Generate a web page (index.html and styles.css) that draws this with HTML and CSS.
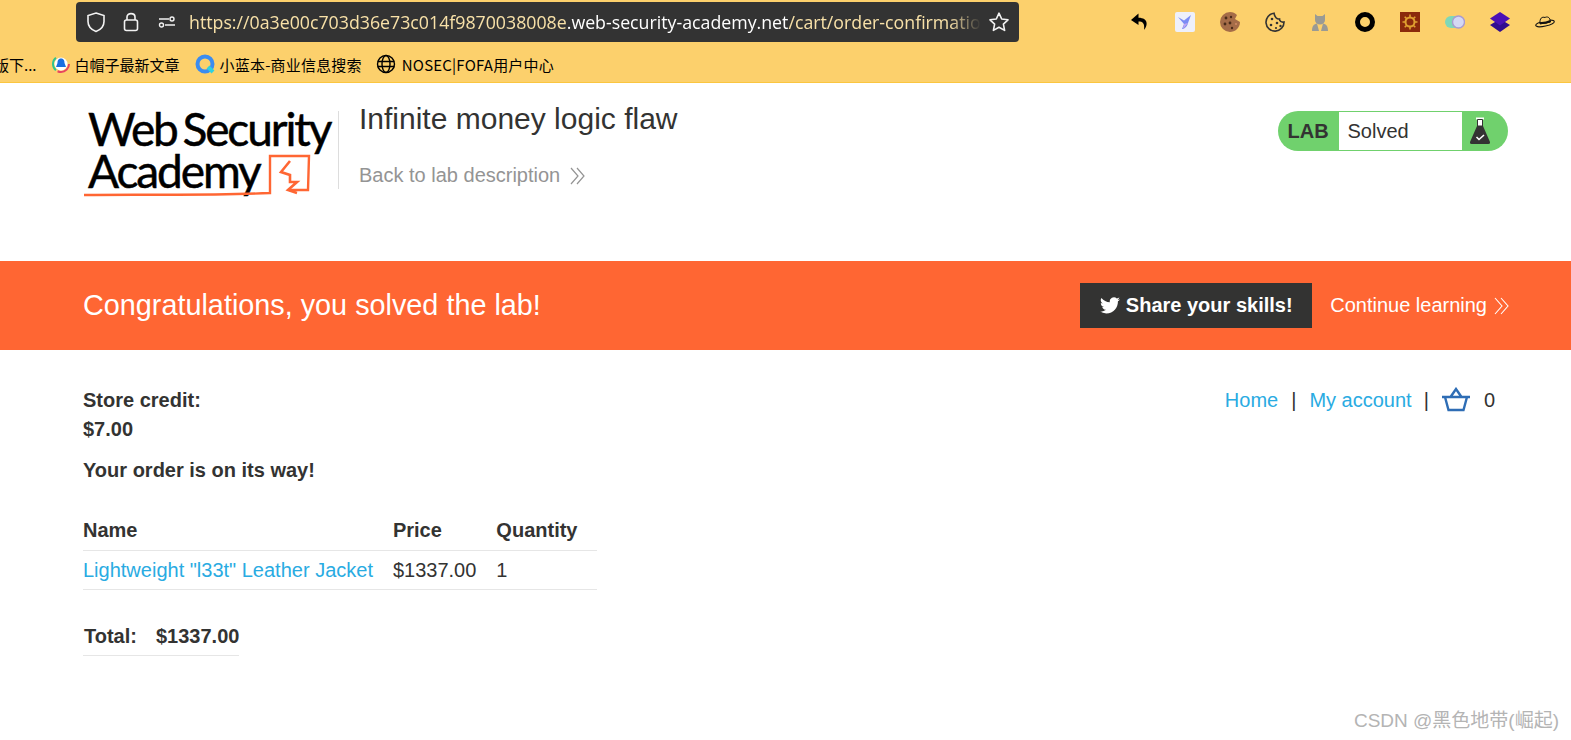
FILE: index.html
```html
<!DOCTYPE html>
<html lang="en">
<head>
    <meta charset="UTF-8">
    <meta name="viewport" content="width=device-width, initial-scale=1.0">
    <title>Infinite money logic flaw</title>
    <link rel="stylesheet" href="styles.css">
</head>
<body>
    <div class="browser-bar">
        <div class="toolbar">
            <div class="address-bar">
                <svg class="chrome-icon shield" width="20" height="22" viewBox="0 0 20 22" fill="none" stroke="#f2f2f2" stroke-width="1.6"><path d="M10 2 L18 4.5 V10.5 C18 15.5 14.5 18.8 10 20.5 C5.5 18.8 2 15.5 2 10.5 V4.5 Z"/></svg>
                <svg class="chrome-icon lock" width="16" height="22" viewBox="0 0 16 22" fill="none" stroke="#f2f2f2" stroke-width="1.6"><rect x="1.5" y="9" width="13" height="10.5" rx="2"/><path d="M4 9 V6 C4 1.500 12 1.500 12 6 V9"/></svg>
                <svg class="chrome-icon" width="18" height="14" viewBox="0 0 18 14" fill="none" stroke="#f2f2f2" stroke-width="1.4"><circle cx="3.500" cy="10" r="2"/><path d="M7 10 H17 M1 4 H11"/><circle cx="14" cy="4" r="2"/></svg>
                <div class="url"><span class="url-dim">https://0a3e00c703d36e73c014f9870038008e</span>.web-security-academy.net<span class="url-dim">/cart/order-confirmatio</span></div>
                <svg class="star" width="22" height="22" viewBox="0 0 22 22" fill="none" stroke="#f2f2f2" stroke-width="1.6" stroke-linejoin="round"><path d="M11 2.200 L13.700 8 L20 8.800 L15.400 13.100 L16.600 19.400 L11 16.300 L5.400 19.400 L6.600 13.100 L2 8.800 L8.300 8 Z"/></svg>
            </div>
            <div class="extensions">
                <svg width="20" height="20" viewBox="0 0 20 20"><path d="M8.500 1.500 L1 8 L8.500 13 V9.500 C12.500 9.500 15 11 14 18 C18 13.500 18.500 6 8.500 5.800 Z" fill="#000"/></svg>
                <svg width="20" height="20" viewBox="0 0 20 20"><rect width="20" height="20" rx="2" fill="#eef0fb"/><path d="M3 5 L9 8.500 L16 3 L13 11 C12 15 9 17 7 17 L9 12 Z" fill="#7b8cf5"/><path d="M9 12 L13 11 L8 17 Z" fill="#c4a6f0"/></svg>
                <svg width="20" height="20" viewBox="0 0 20 20"><path d="M10 0 C13 0 15 1 17 3 L15 7 L20 10 C20 16 15 20 10 20 A10 10 0 0 1 10 0 Z" fill="#a56c48"/><circle cx="6" cy="6" r="1.400" fill="#4a2c1a"/><circle cx="11" cy="5" r="1.200" fill="#4a2c1a"/><circle cx="5" cy="12" r="1.400" fill="#4a2c1a"/><circle cx="10" cy="11" r="1.400" fill="#4a2c1a"/><circle cx="12" cy="16" r="1.200" fill="#4a2c1a"/><circle cx="16" cy="12" r="1.100" fill="#d08a63"/></svg>
                <svg width="20" height="20" viewBox="0 0 20 20" fill="none"><path d="M9 1.200 A9 9 0 1 0 19 10 C16 10.500 14.500 9 14.500 7 C12 7.500 9.500 5 9 1.200 Z" stroke="#333" stroke-width="1.600"/><circle cx="7" cy="7" r="1.300" fill="#333"/><circle cx="12" cy="11" r="1.300" fill="#333"/><circle cx="6" cy="13" r="1.300" fill="#333"/><circle cx="11" cy="16" r="1.100" fill="#333"/><circle cx="15.500" cy="14" r="1.200" fill="#333"/></svg>
                <svg width="20" height="20" viewBox="0 0 20 20" fill="#9a9a94"><path d="M5 2 L7.500 4 H12.500 L15 2 V8 A5 4.500 0 0 1 5 8 Z"/><path d="M2 19 C2 14 4 12 7 11.500 L9 19 Z M18 19 C18 14 16 12 13 11.500 L11 19 Z"/></svg>
                <svg width="20" height="20" viewBox="0 0 20 20" fill="none"><circle cx="10" cy="10" r="7.500" stroke="#000" stroke-width="5"/></svg>
                <svg width="20" height="20" viewBox="0 0 20 20"><rect width="20" height="20" fill="#8b2a0c"/><circle cx="10" cy="10" r="4.500" fill="none" stroke="#e0a030" stroke-width="2"/><path d="M10 2.500 V5 M10 15 V17.500 M2.500 10 H5 M15 10 H17.500 M4.700 4.700 L6.500 6.500 M13.500 13.500 L15.300 15.300 M4.700 15.300 L6.500 13.500 M13.500 6.500 L15.300 4.700" stroke="#e0a030" stroke-width="1.600"/></svg>
                <svg width="20" height="20" viewBox="0 0 20 20"><rect y="4" width="19" height="12" rx="6" fill="#7fd8b8"/><circle cx="13.500" cy="10" r="6" fill="#d4d8f4" stroke="#a99bd0" stroke-width="1.400"/></svg>
                <svg width="20" height="20" viewBox="0 0 20 20"><path d="M10 7 L20 13 L10 20 L0 13 Z" fill="#2f0a8f"/><path d="M10 0 L20 6.500 L10 13.500 L0 6.500 Z" fill="#4a0fb5"/></svg>
                <svg width="20" height="20" viewBox="0 0 20 20" stroke="#111" stroke-width="1"><ellipse cx="10" cy="11.500" rx="9.500" ry="2.600" fill="none" transform="rotate(-12 10 11.500)"/><path d="M5 12 C4.500 6 7 4.500 10 5.500 C12 4.500 15 4.500 15.500 10 Z" fill="#fcd06c"/><path d="M5 11 Q10 11.500 15.500 9" fill="none" stroke-width="2"/></svg>
            </div>
        </div>
        <div class="bookmarks">
            <span class="bookmark">版下...</span>
            <span class="bookmark">
                <svg width="18" height="18" viewBox="0 0 18 18"><circle cx="9" cy="9" r="8" fill="none" stroke="#e8455f" stroke-width="2" stroke-dasharray="16 34"/><circle cx="9" cy="9" r="8" fill="none" stroke="#2fc48d" stroke-width="2" stroke-dasharray="14 36" stroke-dashoffset="-18"/><circle cx="9" cy="9" r="6.500" fill="#fff"/><path d="M9 3.500 C12 3.500 12.500 6 12.500 8 L14 12 H4 L5.500 8 C5.500 6 6 3.500 9 3.500 Z" fill="#1a6fe0"/></svg>
                白帽子最新文章
            </span>
            <span class="bookmark bookmark-wide">
                <svg width="20" height="20" viewBox="0 0 20 20" fill="none"><circle cx="10" cy="10" r="7.500" stroke="#3b8cf0" stroke-width="4"/><path d="M13 13 L18 18" stroke="#2fd0e0" stroke-width="4"/></svg>
                小蓝本-商业信息搜索
            </span>
            <span class="bookmark bookmark-wide">
                <svg width="20" height="20" viewBox="0 0 20 20" fill="none" stroke="#000" stroke-width="1.400"><circle cx="10" cy="10" r="8.500"/><ellipse cx="10" cy="10" rx="4" ry="8.500"/><path d="M1.500 7.500 H18.500 M1.500 12.500 H18.500"/></svg>
                NOSEC|FOFA用户中心
            </span>
        </div>
    </div>

    <header class="lab-header">
        <div class="logo-block">
            <div class="logo">
                <div class="logo-line">Web Security</div>
                <div class="logo-line">Academy</div>
                <svg class="logo-mark" width="252" height="48" viewBox="0 0 252 48" fill="none" stroke="#ff6633" stroke-width="2.400"><path d="M0 45 C60 44 120 46 186 43 L186 6 H225 L224 40 H205"/><path d="M206 11 L197 22 L206 25 L206 32 L213 32 L204 40 L213 43" stroke-width="2.600"/></svg>
            </div>
        </div>
        <div class="lab-title">
            <h2>Infinite money logic flaw</h2>
            <a class="back-link" href="#">Back to lab description
                <svg width="16" height="18" viewBox="0 0 16 18" fill="none" stroke="#949494" stroke-width="1.200"><path d="M1 1 L8 9 L1 17 M7 1 L14 9 L7 17"/></svg>
            </a>
        </div>
        <div class="lab-status">
            <span class="lab-label">LAB</span>
            <span class="lab-state">Solved</span>
            <span class="lab-icon">
                <svg width="22" height="28" viewBox="0 0 22 28"><rect x="7" y="0.500" width="8" height="2" fill="#fff"/><path d="M8.500 2.500 H13.500 V9 H8.500 Z" fill="#fff" stroke="#333"/><path d="M8 9 H14 L21 25 Q21.500 27 19.500 27 H2.500 Q0.500 27 1 25 Z" fill="#333"/><path d="M7.500 20 L10 22.500 L15 18" fill="none" stroke="#fff" stroke-width="1.600"/></svg>
            </span>
        </div>
    </header>

    <section class="solved-banner">
        <h4>Congratulations, you solved the lab!</h4>
        <div class="banner-actions">
            <a class="share-btn" href="#">
                <svg width="20" height="17" viewBox="0 0 24 20" fill="#fff"><path d="M24 2.400 a10 10 0 0 1-2.800.8 A5 5 0 0 0 23.300 .5 a10 10 0 0 1-3.100 1.200 A4.900 4.900 0 0 0 11.800 6.100 A14 14 0 0 1 1.700 1 a4.900 4.900 0 0 0 1.500 6.500 A4.900 4.900 0 0 1 1 6.900 a4.900 4.900 0 0 0 3.900 4.800 a5 5 0 0 1-2.200.1 a4.900 4.900 0 0 0 4.600 3.400 A9.900 9.900 0 0 1 0 17.300 A14 14 0 0 0 7.500 19.500 c9.100 0 14.300-7.700 14-14.600 A10 10 0 0 0 24 2.400 z"/></svg>
                Share your skills!
            </a>
            <a class="continue-link" href="#">Continue learning
                <svg width="16" height="18" viewBox="0 0 16 18" fill="none" stroke="#fff" stroke-width="1.100"><path d="M1 1 L8 9 L1 17 M7 1 L14 9 L7 17"/></svg>
            </a>
        </div>
    </section>

    <main class="content">
        <div class="top-row">
            <p class="credit">Store credit:<br>$7.00</p>
            <nav class="account-nav">
                <a href="#">Home</a>
                <span class="sep">|</span>
                <a href="#">My account</a>
                <span class="sep sep-cart">|</span>
                <svg width="28" height="25" viewBox="0 0 28 25" fill="none" stroke="#2e6db5" stroke-width="2.400"><path d="M0 10 H28 M3 10 L6.500 23 H21.500 L25 10 M8.500 10 L14 2 L19.500 10"/></svg>
                <span class="cart-count">0</span>
            </nav>
        </div>
        <p class="order-note">Your order is on its way!</p>
        <table class="order-table">
            <tr>
                <th>Name</th>
                <th>Price</th>
                <th>Quantity</th>
            </tr>
            <tr>
                <td><a href="#">Lightweight "l33t" Leather Jacket</a></td>
                <td>$1337.00</td>
                <td>1</td>
            </tr>
        </table>
        <table class="total-table">
            <tr>
                <th>Total:</th>
                <th>$1337.00</th>
            </tr>
        </table>
    </main>

    <div class="watermark">CSDN @黑色地带(崛起)</div>
</body>
</html>
```

FILE: styles.css
```css
html, body {
    height: 100%;
    overflow: hidden;
}

body {
    margin: 0;
    position: relative;
    background-color: white;
    color: #333332;
    font-family: "Liberation Sans", Arial, sans-serif;
    font-size: 20px;
}

a {
    color: #29abe2;
    text-decoration: none;
}

/* browser chrome */
.browser-bar {
    height: 82px;
    background-color: #fcd06c;
    border-bottom: 1px solid #fbc63f;
    overflow: hidden;
}

.toolbar {
    display: flex;
    align-items: flex-start;
    height: 51px;
    padding: 2px 0 0 76px;
    box-sizing: border-box;
}

.address-bar {
    display: flex;
    align-items: center;
    width: 943px;
    height: 40px;
    flex-shrink: 0;
    padding: 0 9px 0 10px;
    box-sizing: border-box;
    background-color: #333;
    border-radius: 4px;
    color: #fff;
}

.chrome-icon {
    margin-right: 15px;
    flex-shrink: 0;
}

.shield {
    margin-right: 17px;
}

.lock {
    margin-right: 19px;
}

.url {
    flex: 1;
    margin-left: -2px;
    overflow: hidden;
    white-space: nowrap;
    font-family: "Open Sans", sans-serif;
    font-size: 17.75px;
    -webkit-mask-image: linear-gradient(to right, #000 96%, transparent 100%);
    mask-image: linear-gradient(to right, #000 96%, transparent 100%);
}

.url-dim {
    color: #f8e1a8;
}

.star {
    margin-left: 7px;
    flex-shrink: 0;
}

.extensions {
    display: flex;
    gap: 25px;
    margin: 10px 0 0 111px;
}

.bookmarks {
    display: flex;
    align-items: center;
    gap: 15px;
    height: 26px;
    margin-left: -6px;
    color: #000;
    font-family: "Noto Sans CJK SC", "Open Sans", sans-serif;
    font-size: 15px;
    white-space: nowrap;
}

.bookmark {
    display: flex;
    align-items: center;
    gap: 5px;
}

.bookmark-wide {
    letter-spacing: 0.2px;
}

.bookmark-wide:last-child {
    gap: 6px;
    margin-left: -1px;
}

/* lab header */
.lab-header {
    display: flex;
    align-items: flex-start;
    height: 178px;
    padding: 28px 63px 0 84px;
    box-sizing: border-box;
}

.logo-block {
    width: 254px;
    height: 78px;
    border-right: 1px solid #ddd;
}

.logo {
    position: relative;
    padding-left: 4px;
    margin-top: -3px;
    color: #000;
    font-family: Lato, sans-serif;
    font-size: 46px;
    letter-spacing: -2.1px;
    word-spacing: -4px;
    line-height: 42px;
    white-space: nowrap;
    -webkit-text-stroke: 0.5px #000;
}

.logo-mark {
    position: absolute;
    left: 0;
    top: 42px;
}

.lab-title {
    flex: 1;
    padding-left: 20px;
}

.lab-title h2 {
    margin: -17px 0 0;
    font-size: 30px;
    font-weight: normal;
    line-height: 50px;
}

.back-link {
    display: flex;
    align-items: center;
    gap: 10px;
    margin-top: 20px;
    color: #949494;
}

.lab-status {
    display: flex;
    align-items: stretch;
    width: 230px;
    height: 40px;
    border-radius: 20px;
    background-color: #70d16d;
    overflow: hidden;
}

.lab-label {
    width: 61px;
    padding-left: 9.5px;
    box-sizing: border-box;
    font-weight: bold;
    line-height: 40px;
}

.lab-state {
    width: 123px;
    margin: 1px 0;
    padding-left: 8.5px;
    box-sizing: border-box;
    background-color: #fff;
    line-height: 38px;
}

.lab-icon {
    display: flex;
    flex: 1;
    align-items: center;
    padding-left: 7px;
}

/* solved banner */
.solved-banner {
    display: flex;
    align-items: center;
    justify-content: space-between;
    height: 89px;
    padding: 0 61px 0 83px;
    background-color: #ff6633;
    color: #fff;
}

.solved-banner h4 {
    margin: 0;
    font-size: 28.8px;
    font-weight: normal;
}

.banner-actions {
    display: flex;
    align-items: center;
    gap: 18px;
}

.share-btn {
    display: flex;
    align-items: center;
    justify-content: center;
    gap: 6px;
    width: 232px;
    height: 45px;
    background-color: #333332;
    color: #fff;
    font-weight: bold;
}

.continue-link {
    display: flex;
    align-items: center;
    gap: 7px;
    color: #fff;
}

/* page content */
.content {
    padding: 0 63px 0 83px;
}

.top-row {
    display: flex;
    justify-content: space-between;
    padding-top: 36px;
}

.credit {
    margin: 0;
    font-weight: bold;
    line-height: 29px;
}

.account-nav {
    display: flex;
    align-items: flex-start;
    height: 29px;
    line-height: 29px;
}

.sep {
    margin: 0 13px;
}

.sep-cart {
    margin-left: 12px;
}

.account-nav svg {
    margin: 1px 0 0;
}

.cart-count {
    margin: 0 13px 0 14px;
}

.order-note {
    margin: 12px 0 0;
    font-weight: bold;
    line-height: 29px;
}

.order-table {
    width: 514px;
    margin-top: 26px;
    border-collapse: collapse;
}

.order-table th {
    height: 39px;
    padding: 0 20px 0 0;
    text-align: left;
    border-bottom: 1px solid #e6e6e6;
}

.order-table td {
    height: 38px;
    padding: 0 20px 0 0;
    border-bottom: 1px solid #e6e6e6;
    white-space: nowrap;
}

.total-table {
    margin-top: 27px;
    border-collapse: collapse;
    border-bottom: 1px solid #e6e6e6;
}

.total-table th {
    height: 38px;
    padding: 0 0 0 1px;
    text-align: left;
}

.total-table th:first-child {
    padding-right: 18px;
}

/* overlay from the image host */
.watermark {
    position: absolute;
    right: 12px;
    bottom: 8px;
    color: #b4b4b4;
    font-family: "Liberation Sans", "Noto Sans CJK SC", sans-serif;
    font-size: 19px;
}
```
